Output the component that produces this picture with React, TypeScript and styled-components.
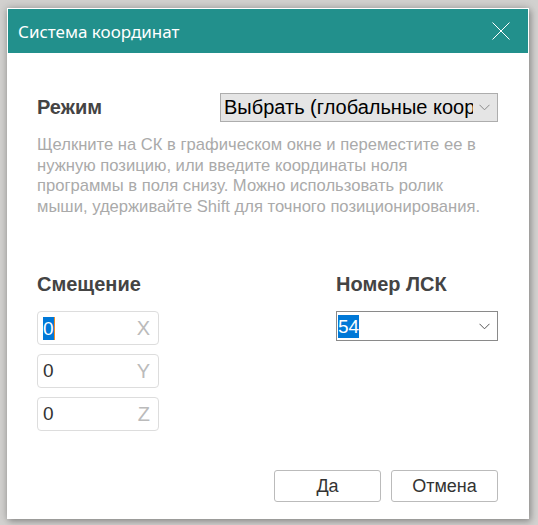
import { createGlobalStyle, styled } from 'styled-components';

const GlobalStyle = createGlobalStyle`
  html, body {
    margin: 0;
    padding: 0;
    background: #d2d1cf;
  }
  body {
    font-family: "Liberation Sans", Arial, sans-serif;
  }
`;

export default function App() {
  return (
    <>
      <GlobalStyle />
      <Page>
        <Dialog>
          <Header>
            <Title>Система координат</Title>
            <Close>
              <svg width="20" height="18" viewBox="0 0 20 18">
                <path d="M1.5 0.5L18.5 17.5M18.5 0.5L1.5 17.5" stroke="#ffffff" strokeWidth="1" fill="none" />
              </svg>
            </Close>
          </Header>
          <Body>
            <ModeRow>
              <Label>Режим</Label>
              <ModeSelect>
                <SelectText>Выбрать (глобальные координаты)</SelectText>
                <Chevron color="#8a8a8a" />
              </ModeSelect>
            </ModeRow>
            <Hint>
              Щелкните на СК в графическом окне и переместите ее в нужную позицию, или введите координаты
              ноля программы в поля снизу. Можно использовать ролик мыши, удерживайте Shift для точного
              позиционирования.
            </Hint>
            <Columns>
              <Column>
                <Label>Смещение</Label>
                <Fields>
                  {['X', 'Y', 'Z'].map((axis, i) => (
                    <Field key={axis}>
                      {i === 0 ? <Selected caret>0</Selected> : <Value>0</Value>}
                      <Axis>{axis}</Axis>
                    </Field>
                  ))}
                </Fields>
              </Column>
              <Column>
                <Label>Номер ЛСК</Label>
                <LskSelect>
                  <Selected>54</Selected>
                  <Chevron color="#555555" />
                </LskSelect>
              </Column>
            </Columns>
            <Footer>
              <Button>Да</Button>
              <Button>Отмена</Button>
            </Footer>
          </Body>
        </Dialog>
      </Page>
    </>
  );
}

function Chevron({ color }: { color: string }) {
  return (
    <ChevronBox>
      <svg width="11" height="7" viewBox="0 0 11 7">
        <path d="M0.5 0.8L5.5 5.8L10.5 0.8" stroke={color} strokeWidth="1" fill="none" />
      </svg>
    </ChevronBox>
  );
}

const Page = styled.div`
  padding: 8px 9px 6px 7px;
`;

const Dialog = styled.div`
  width: 520px;
  height: 509px;
  background: #ffffff;
  border: 1px solid #ffffff;
  box-shadow: 0 0 8px rgba(0, 0, 0, 0.25), 2px 3px 6px rgba(0, 0, 0, 0.2);
  display: flex;
  flex-direction: column;
`;

const Header = styled.div`
  height: 44px;
  background: #22908c;
  display: flex;
  align-items: center;
  justify-content: space-between;
  padding: 0 17px 0 10px;
`;

const Title = styled.div`
  color: #ffffff;
  font-family: "Noto Sans", "Open Sans", sans-serif;
  font-size: 17px;
`;

const Close = styled.div`
  display: flex;
  width: 20px;
  height: 18px;
`;

const Body = styled.div`
  flex: 1;
  display: flex;
  flex-direction: column;
  padding: 40px 30px 16px 29px;
`;

const ModeRow = styled.div`
  display: flex;
  align-items: center;
  justify-content: space-between;
`;

const Label = styled.div`
  font-size: 20px;
  font-weight: bold;
  color: #444444;
`;

const ModeSelect = styled.div`
  width: 273px;
  height: 27px;
  box-sizing: content-box;
  border: 1px solid #adadad;
  background: #e5e5e5;
  display: flex;
  align-items: center;
  padding-left: 3px;
  overflow: hidden;
`;

const SelectText = styled.div`
  flex: 1;
  font-size: 20px;
  color: #000000;
  white-space: nowrap;
  overflow: hidden;
`;

const ChevronBox = styled.div`
  display: flex;
  width: 11px;
  margin: 0 7px 0 6px;
`;

const Hint = styled.p`
  margin: 13px 0 0 0;
  max-width: 452px;
  font-size: 16.6px;
  line-height: 20.5px;
  color: #aaaaaa;
`;

const Columns = styled.div`
  display: flex;
  justify-content: space-between;
  margin-top: 56px;
`;

const Column = styled.div`
  display: flex;
  flex-direction: column;
  gap: 15px;
  width: 162px;
`;

const Fields = styled.div`
  display: flex;
  flex-direction: column;
  gap: 9px;
  width: 122px;
`;

const Field = styled.div`
  height: 32px;
  border: 1px solid #dddddd;
  border-radius: 4px;
  display: flex;
  align-items: center;
  justify-content: space-between;
  padding: 0 8px 0 5px;
  font-size: 19px;
`;

const Value = styled.span`
  color: #333333;
`;

const Selected = styled.span<{ caret?: boolean }>`
  background: #0078d7;
  color: #ffffff;
  font-size: 19px;
  line-height: 23px;
  border-right: ${(p) => (p.caret ? '1px solid #f08a24' : 'none')};
`;

const Axis = styled.span`
  color: #bbbbbb;
  font-size: 20px;
`;

const LskSelect = styled.div`
  height: 28px;
  border: 1px solid #8a8a8a;
  display: flex;
  align-items: center;
  justify-content: space-between;
  padding-left: 1px;
`;

const Footer = styled.div`
  margin-top: auto;
  display: flex;
  justify-content: flex-end;
  gap: 10px;
`;

const Button = styled.button`
  width: 107px;
  height: 32px;
  background: #ffffff;
  border: 1px solid #bbbbbb;
  border-radius: 3px;
  font-family: "Liberation Sans", Arial, sans-serif;
  font-size: 18px;
  color: #333333;
`;
